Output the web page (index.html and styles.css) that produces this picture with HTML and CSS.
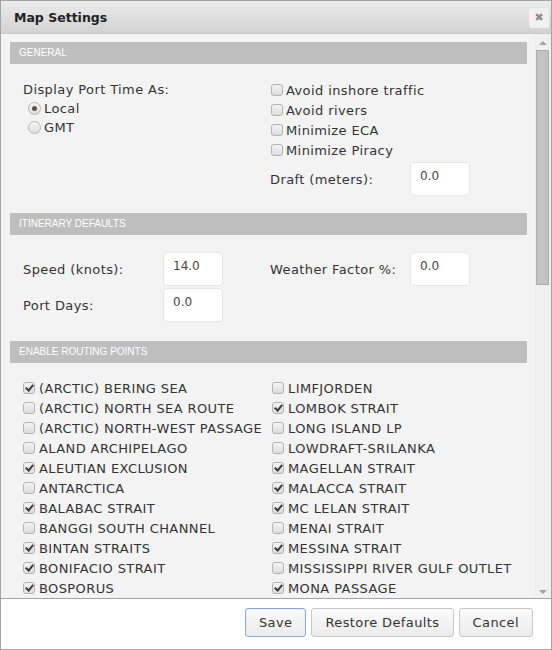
FILE: index.html
```html
<!DOCTYPE html>
<html>
<head>
<meta charset="utf-8">
<title>Map Settings</title>
<link rel="stylesheet" href="styles.css">
</head>
<body>
<div class="dialog">
  <div class="titlebar">
    <span class="title">Map Settings</span>
    <span class="close">&#10006;</span>
  </div>
  <div class="main">
    <div class="content">
      <div class="section-head">GENERAL</div>
      <div class="section general">
        <div class="col-left">
          <div class="line">Display Port Time As:</div>
          <div class="line radio-line"><span class="radio on"></span>Local</div>
          <div class="line radio-line"><span class="radio"></span>GMT</div>
        </div>
        <div class="col-right">
          <div class="row"><span class="cb"></span>Avoid inshore traffic</div>
          <div class="row"><span class="cb"></span>Avoid rivers</div>
          <div class="row"><span class="cb"></span>Minimize ECA</div>
          <div class="row"><span class="cb"></span>Minimize Piracy</div>
          <div class="field draft"><span class="flabel">Draft (meters):</span><span class="input">0.0</span></div>
        </div>
      </div>

      <div class="section-head">ITINERARY DEFAULTS</div>
      <div class="section itinerary">
        <div class="col-left">
          <div class="field"><span class="flabel">Speed (knots):</span><span class="input">14.0</span></div>
          <div class="field"><span class="flabel">Port Days:</span><span class="input">0.0</span></div>
        </div>
        <div class="col-right">
          <div class="field"><span class="flabel">Weather Factor %:</span><span class="input">0.0</span></div>
        </div>
      </div>

      <div class="section-head">ENABLE ROUTING POINTS</div>
      <div class="section routing">
        <div class="list list-left">
          <div class="row"><span class="cb on"></span>(ARCTIC) BERING SEA</div>
          <div class="row"><span class="cb"></span>(ARCTIC) NORTH SEA ROUTE</div>
          <div class="row"><span class="cb"></span>(ARCTIC) NORTH-WEST PASSAGE</div>
          <div class="row"><span class="cb"></span>ALAND ARCHIPELAGO</div>
          <div class="row"><span class="cb on"></span>ALEUTIAN EXCLUSION</div>
          <div class="row"><span class="cb"></span>ANTARCTICA</div>
          <div class="row"><span class="cb on"></span>BALABAC STRAIT</div>
          <div class="row"><span class="cb"></span>BANGGI SOUTH CHANNEL</div>
          <div class="row"><span class="cb on"></span>BINTAN STRAITS</div>
          <div class="row"><span class="cb on"></span>BONIFACIO STRAIT</div>
          <div class="row"><span class="cb on"></span>BOSPORUS</div>
        </div>
        <div class="list list-right">
          <div class="row"><span class="cb"></span>LIMFJORDEN</div>
          <div class="row"><span class="cb on"></span>LOMBOK STRAIT</div>
          <div class="row"><span class="cb"></span>LONG ISLAND LP</div>
          <div class="row"><span class="cb"></span>LOWDRAFT-SRILANKA</div>
          <div class="row"><span class="cb on"></span>MAGELLAN STRAIT</div>
          <div class="row"><span class="cb on"></span>MALACCA STRAIT</div>
          <div class="row"><span class="cb on"></span>MC LELAN STRAIT</div>
          <div class="row"><span class="cb"></span>MENAI STRAIT</div>
          <div class="row"><span class="cb on"></span>MESSINA STRAIT</div>
          <div class="row"><span class="cb"></span>MISSISSIPPI RIVER GULF OUTLET</div>
          <div class="row"><span class="cb on"></span>MONA PASSAGE</div>
        </div>
      </div>
    </div>
    <div class="scrollbar">
      <span class="arrow up"></span>
      <span class="thumb"></span>
      <span class="track"></span>
      <span class="arrow down"></span>
    </div>
  </div>
  <div class="footer">
    <button class="btn btn-primary">Save</button>
    <button class="btn">Restore Defaults</button>
    <button class="btn">Cancel</button>
  </div>
</div>
</body>
</html>
```

FILE: styles.css
```css
html, body {
  margin: 0;
  padding: 0;
  background: #ffffff;
}

.dialog {
  box-sizing: border-box;
  width: 552px;
  height: 650px;
  border: 1px solid #a4a4a4;
  display: flex;
  flex-direction: column;
  font-family: "DejaVu Sans", Verdana, sans-serif;
  font-size: 13px;
  letter-spacing: 0.4px;
  color: #333333;
  overflow: hidden;
}

.titlebar {
  box-sizing: border-box;
  height: 33px;
  flex: none;
  display: flex;
  align-items: center;
  justify-content: space-between;
  padding: 0 2px 0 13px;
  background: linear-gradient(#ececec, #d2d2d2);
  border-bottom: 1px solid #c9c9c9;
}

.title {
  font-weight: bold;
  font-size: 12.5px;
  letter-spacing: 0;
  color: #222222;
  margin-top: 1px;
}

.close {
  width: 20px;
  height: 20px;
  margin-top: 1px;
  display: flex;
  align-items: center;
  justify-content: center;
  background: #f1f1f1;
  border-radius: 3px;
  color: #8e8e8e;
  font-size: 11px;
  font-weight: bold;
  letter-spacing: 0;
}

.main {
  flex: 1;
  display: flex;
  background: #f3f3f3;
  min-height: 0;
}

.content {
  flex: 1;
  padding: 8px 7px 0 9px;
  overflow: hidden;
}

.section-head {
  height: 22px;
  line-height: 22px;
  background: #bebebe;
  color: #ffffff;
  font-family: "Liberation Sans", Arial, sans-serif;
  font-size: 10px;
  letter-spacing: 0;
  padding-left: 9px;
}

.section {
  display: flex;
  padding-left: 13px;
}

.general {
  padding-top: 16px;
  padding-bottom: 17px;
}

.itinerary {
  padding-top: 17px;
  padding-bottom: 19px;
}

.routing {
  padding-top: 15px;
}

.col-left {
  width: 247px;
  flex: none;
}

.col-right {
  flex: 1;
}

.line {
  height: 19px;
  line-height: 19px;
  white-space: nowrap;
}

.radio-line {
  display: flex;
  align-items: center;
  padding-left: 5px;
}

.radio {
  box-sizing: border-box;
  width: 13px;
  height: 13px;
  border-radius: 50%;
  border: 1px solid #b4b4b4;
  background: linear-gradient(#f6f6f6, #dedede);
  margin-right: 3px;
  display: flex;
  align-items: center;
  justify-content: center;
}

.radio.on::after {
  content: "";
  width: 5px;
  height: 5px;
  border-radius: 50%;
  background: #555555;
}

.row {
  height: 20px;
  display: flex;
  align-items: center;
  white-space: nowrap;
}

.col-right .row .cb {
  margin-left: 1px;
  margin-right: 3px;
}

.cb {
  position: relative;
  box-sizing: border-box;
  width: 12px;
  height: 12px;
  flex: none;
  border: 1px solid #b3b3b3;
  border-radius: 3px;
  background: linear-gradient(#f4f4f4, #dcdcdc);
  margin-right: 4px;
}

.cb.on::after {
  content: "";
  position: absolute;
  left: 3px;
  top: 0px;
  width: 3px;
  height: 6px;
  border: solid #3a3a3a;
  border-width: 0 2px 2px 0;
  transform: rotate(40deg);
}

.field {
  display: flex;
  align-items: center;
  height: 34px;
}

.field + .field {
  margin-top: 2px;
}

.draft {
  margin-top: 2px;
}

.flabel {
  width: 140px;
  flex: none;
  white-space: nowrap;
}

.input {
  box-sizing: border-box;
  width: 60px;
  height: 34px;
  background: #ffffff;
  border: 1px solid #e6e6e6;
  border-radius: 4px;
  padding: 0 0 6px 9px;
  display: flex;
  align-items: center;
  font-size: 12px;
  letter-spacing: 0;
  color: #444444;
}

.list {
  flex: none;
}

.list-left {
  width: 249px;
}

.scrollbar {
  width: 17px;
  flex: none;
  display: flex;
  flex-direction: column;
  align-items: center;
  background: #f0f0f0;
}

.arrow {
  height: 16px;
  width: 17px;
  flex: none;
  display: flex;
  align-items: center;
  justify-content: center;
}

.arrow::after {
  content: "";
  width: 0;
  height: 0;
  border-left: 4px solid transparent;
  border-right: 4px solid transparent;
}

.arrow.up::after {
  border-bottom: 4px solid #a3a3a3;
  margin-top: 2px;
}

.arrow.down::after {
  border-top: 4px solid #a3a3a3;
  margin-top: 4px;
}

.thumb {
  box-sizing: border-box;
  width: 13px;
  height: 235px;
  flex: none;
  background: #c3c3c3;
  border: 1px solid #ababab;
}

.track {
  flex: 1;
}

.footer {
  box-sizing: border-box;
  height: 51px;
  flex: none;
  border-top: 1px solid #a4a4a4;
  background: #ffffff;
  display: flex;
  justify-content: flex-end;
  align-items: flex-start;
  gap: 5px;
  padding: 9px 18px 0 0;
}

.btn {
  height: 29px;
  padding: 0 13px;
  font-family: "DejaVu Sans", Verdana, sans-serif;
  font-size: 13px;
  letter-spacing: 0.4px;
  color: #333333;
  background: linear-gradient(#fbfbfb, #ebebeb);
  border: 1px solid #c8c8c8;
  border-radius: 3px;
}

.btn-primary {
  border-color: #8fa9cf;
  box-shadow: inset 0 0 0 1px #e6eefa;
}
```
